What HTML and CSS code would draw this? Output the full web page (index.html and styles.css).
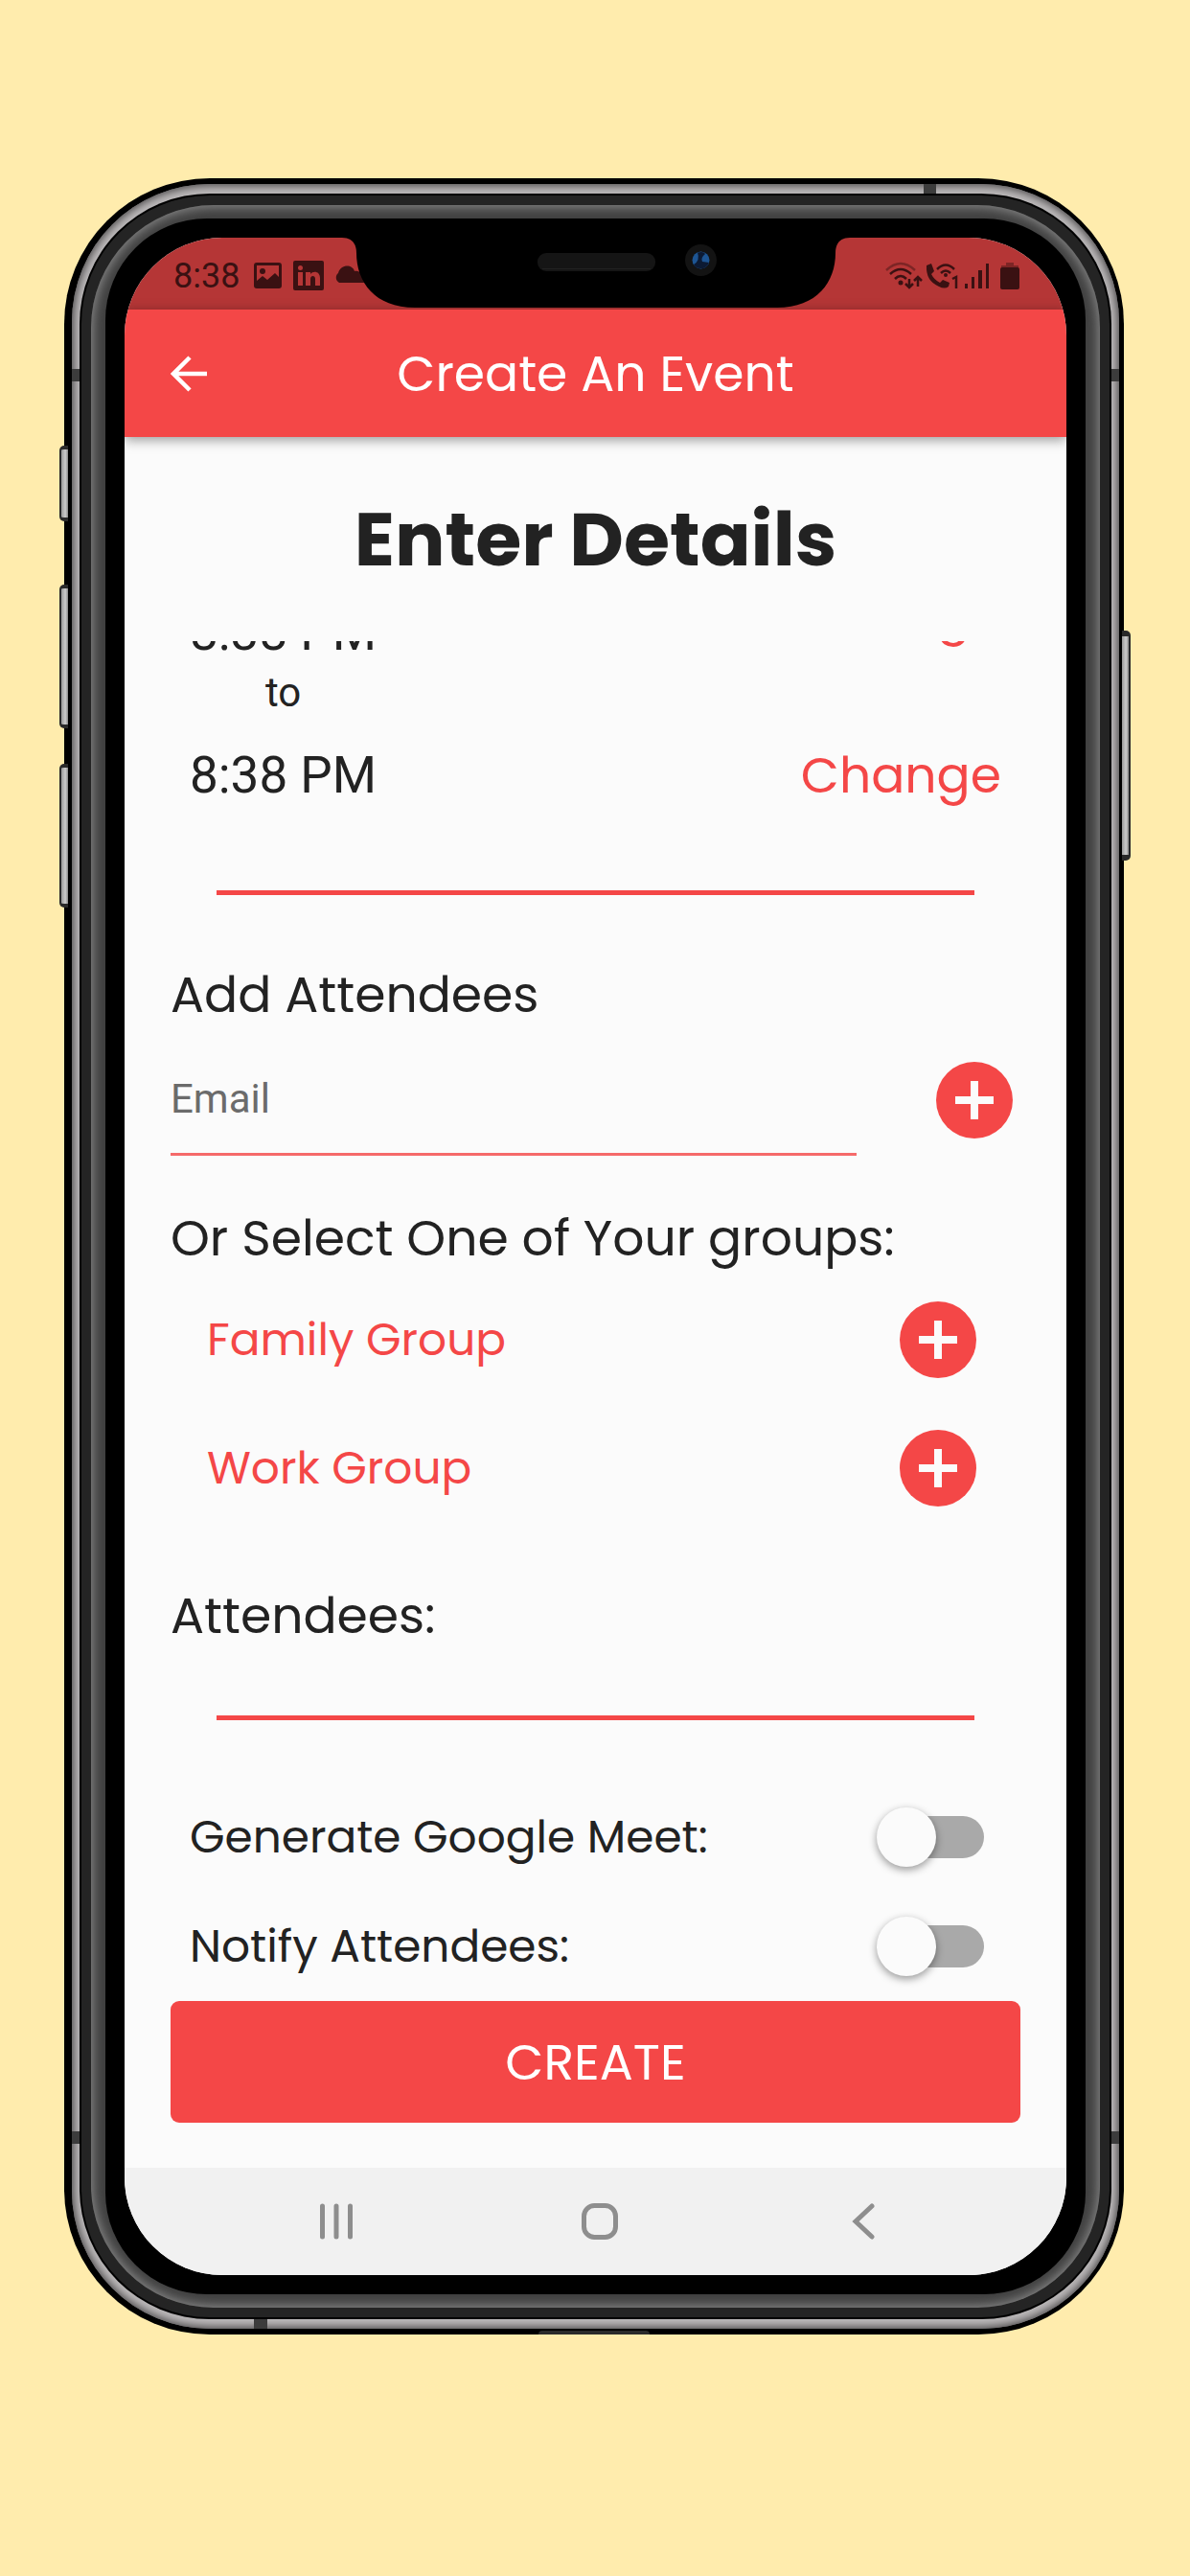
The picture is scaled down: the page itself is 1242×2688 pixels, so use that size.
FILE: index.html
```html
<!DOCTYPE html>
<html lang="en">
<head>
<meta charset="utf-8">
<meta name="viewport" content="width=device-width, initial-scale=1">
<title>Create An Event</title>
<link rel="stylesheet" href="styles.css">
</head>
<body>
<div class="phone">
  <div class="shell">
    <span class="antenna antenna-left antenna-high"></span>
    <span class="antenna antenna-left antenna-low"></span>
    <span class="antenna antenna-right antenna-high"></span>
    <span class="antenna antenna-right antenna-low"></span>
    <span class="antenna antenna-top"></span>
    <span class="antenna antenna-bottom"></span>
    <span class="port"></span>
    <div class="rim"><div class="edge"><div class="band"><div class="bevel"><div class="glass">
      <div class="screen">
        <svg class="notch" viewBox="0 0 530 73" aria-hidden="true">
          <path d="M0 0C10 0 15 6 15 16C15 46 34 73 76 73H454C496 73 515 46 515 16C515 6 520 0 530 0Z" fill="#000"/>
          <rect x="204" y="16" width="123" height="19" rx="9" fill="#151515"/>
          <path d="M209 32.500H322" stroke="#222" stroke-width="1"/>
          <circle cx="374.500" cy="23.500" r="16.500" fill="#131313"/>
          <circle cx="374.500" cy="23.500" r="9" fill="#1d5593"/>
          <path d="M371 15.500Q378 14 379 17Q374 21 376 25L383 26Q380 33 374 32Q369 32 367 28Q374 24 371 15.500Z" fill="#0c1a33"/>
        </svg>
        <div class="status">
          <span class="clock">8:38</span>
          <svg class="status-left" viewBox="0 0 116 34" aria-hidden="true">
            <path fill-rule="evenodd" d="M3 3H26Q29 3 29 6V27Q29 30 26 30H3Q0 30 0 27V6Q0 3 3 3ZM3 6V22L9 17L14 21L22 14L26 18V6Z"/>
            <circle cx="9" cy="12" r="3"/>
            <rect x="41" y="1" width="32" height="31" rx="2"/>
            <g class="cutout"><circle cx="48.500" cy="8.500" r="2.500"/><path d="M46 13H51V27H46ZM54 13H59V15C62 11 69 12 69 19V27H64V20C64 16 59 16 59 20V27H54Z"/></g>
            <path d="M89 24A6 6 0 0 1 88 14C91 4 103 5 105 12C110 11 114 14 115 24Z"/>
          </svg>
          <svg class="status-right" viewBox="0 0 140 32" aria-hidden="true">
            <g fill="none" stroke="currentColor" stroke-width="2.500">
              <path opacity=".45" d="M1 10Q16-4 31 10"/>
              <path d="M5 14Q16 4 27 14"/>
              <path d="M10 19Q16 13 22 19"/>
              <path d="M25 19V27M21 24L25 28L29 24M34 27V18M30 21L34 17L38 21"/>
              <path d="M54 9Q63 0 72 9"/>
              <path d="M58 13Q63 8 68 13"/>
              <path d="M70 19L74 17V29"/>
            </g>
            <circle cx="16" cy="23" r="2.500"/><circle cx="63" cy="15" r="2"/>
            <path d="M43 5L48 3L51 11L48 14Q51 20 57 23L60 20L67 23L66 27Q62 30 56 27Q42 21 43 5Z"/>
            <path d="M83 24H86V29H83ZM90 17H93V29H90ZM97 10H101V29H97ZM105 3H108V29H105Z"/>
            <path opacity=".45" d="M126 2H134V5H139V8H121V5H126Z"/>
            <rect x="120" y="7" width="20" height="23" rx="2"/>
          </svg>
        </div>
        <header class="appbar">
          <button class="back" type="button" aria-label="Back">
            <svg viewBox="0 0 38 38" aria-hidden="true"><path d="M38 19H4M20 2L3 19L20 36" fill="none" stroke="currentColor" stroke-width="4.500"/></svg>
          </button>
          <h1 class="title">Create An Event</h1>
        </header>
        <h2 class="heading">Enter Details</h2>
        <form class="form">
          <div class="fields">
            <div class="time-row time-start">
              <div class="time-stack"><span class="time">8:38 PM</span><span class="to">to</span></div>
              <button class="change" type="button">Change</button>
            </div>
            <div class="time-row time-end">
              <span class="time">8:38 PM</span>
              <button class="change" type="button">Change</button>
            </div>
            <hr class="divider">
            <h3 class="label">Add Attendees</h3>
            <div class="email-row">
              <input class="email" type="email" placeholder="Email" aria-label="Email">
              <button class="add" type="button" aria-label="Add attendee"><svg viewBox="0 0 40 40" aria-hidden="true"><path d="M20 0V40M0 20H40" stroke="currentColor" stroke-width="8"/></svg></button>
            </div>
            <h3 class="label label-groups">Or Select One of Your groups:</h3>
            <div class="group-row">
              <span class="group">Family Group</span>
              <button class="add" type="button" aria-label="Add Family Group"><svg viewBox="0 0 40 40" aria-hidden="true"><path d="M20 0V40M0 20H40" stroke="currentColor" stroke-width="8"/></svg></button>
            </div>
            <div class="group-row">
              <span class="group">Work Group</span>
              <button class="add" type="button" aria-label="Add Work Group"><svg viewBox="0 0 40 40" aria-hidden="true"><path d="M20 0V40M0 20H40" stroke="currentColor" stroke-width="8"/></svg></button>
            </div>
            <h3 class="label label-list">Attendees:</h3>
            <hr class="divider">
            <div class="switch-row">
              <label for="meet">Generate Google Meet:</label>
              <input class="switch" id="meet" type="checkbox" role="switch">
            </div>
            <div class="switch-row">
              <label for="notify">Notify Attendees:</label>
              <input class="switch" id="notify" type="checkbox" role="switch">
            </div>
          </div>
          <button class="create" type="submit">CREATE</button>
        </form>
        <nav class="navbar" aria-label="System">
          <button type="button" aria-label="Recent apps"><svg viewBox="0 0 38 38" aria-hidden="true"><path d="M4.500 3V35M19 3V35M33.500 3V35"/></svg></button>
          <button type="button" aria-label="Home"><svg viewBox="0 0 38 38" aria-hidden="true"><rect x="2.500" y="2.500" width="33" height="33" rx="11"/></svg></button>
          <button type="button" aria-label="Back"><svg viewBox="0 0 38 38" aria-hidden="true"><path d="M28 3L11 19L28 35"/></svg></button>
        </nav>
      </div>
    </div></div></div></div></div>
  </div>
  <span class="key key-mute"></span>
  <span class="key key-up"></span>
  <span class="key key-down"></span>
  <span class="key key-power"></span>
</div>
</body>
</html>
```
FILE: styles.css
```css
:root {
  --red: #f44747;
  --ink: #222;
  --brand: Poppins, Inter, "Open Sans", sans-serif;
  --system: Roboto, "Open Sans", sans-serif;
}

* { box-sizing: border-box; margin: 0; }

body {
  display: flex;
  height: 100vh;
  padding: 186px 69px 252px 67px;
  background: #ffecad;
  color: var(--ink);
  font-family: var(--brand);
}

button {
  padding: 0;
  border: 0;
  background: none;
  color: inherit;
  font: inherit;
  cursor: pointer;
}

/* Handset */
.phone, .shell, .rim, .edge, .band, .bevel, .glass, .screen {
  display: flex;
  flex: 1;
  min-width: 0;
  min-height: 0;
}
.phone, .shell { position: relative; }
.shell { padding: 6px 5px 6px 8px; border-radius: 152px; background: #000; }
.rim { padding: 10px 8px; border-radius: 144px; background: #bcb9ba; box-shadow: inset 0 0 9px 2px #4a4849; }
.edge { padding: 2px; border-radius: 136px; background: #000; }
.band { padding: 10px; border-radius: 134px; background: #242424; }
.bevel { padding: 14px 15px; border-radius: 128px; background: #404040; box-shadow: inset 0 0 12px 2px #8a8a8a; }
.glass { padding: 20px; border-radius: 106px; background: #000; }
.screen {
  position: relative;
  flex-direction: column;
  overflow: hidden;
  border-radius: 102px;
  background: #fbfbfb;
}

.key {
  position: absolute;
  left: -5px;
  width: 9px;
  border: solid #2a2a2a;
  border-width: 4px 0 4px 2px;
  border-radius: 5px 0 0 5px;
  background: linear-gradient(90deg, #999, #ccc 60%, #888);
}
.key-mute { top: 279px; height: 79px; }
.key-up { top: 424px; height: 150px; }
.key-down { top: 611px; height: 150px; }
.key-power {
  top: 472px;
  right: -7px;
  left: auto;
  height: 240px;
  border-width: 6px 2px 6px 0;
  border-radius: 0 5px 5px 0;
}

.antenna { position: absolute; background: #3c3c3c; }
.antenna-left { left: 8px; width: 8px; height: 13px; }
.antenna-right { right: 5px; width: 8px; height: 13px; }
.antenna-high { top: 199px; }
.antenna-low { bottom: 199px; }
.antenna-top { top: 6px; right: 196px; width: 13px; height: 10px; }
.antenna-bottom { bottom: 6px; left: 198px; width: 14px; height: 10px; }
.port {
  position: absolute;
  bottom: 0;
  left: calc(50% - 58px);
  width: 116px;
  height: 4px;
  border-radius: 6px 6px 0 0;
  background: #2b2b2b;
}

.notch { position: absolute; top: 0; left: calc(50% - 265px); width: 530px; height: 73px; }

/* System bars */
.status {
  display: flex;
  flex: none;
  align-items: center;
  height: 75px;
  padding: 4px 49px 0 51px;
  background: #b53636;
  color: #3a1112;
  font: 36px/40px var(--system);
}
.status svg { fill: currentColor; }
.status-left { width: 116px; height: 34px; margin-left: 15px; }
.status-left .cutout { fill: #b53636; }
.status-right { width: 140px; height: 32px; margin-left: auto; }

.navbar {
  display: flex;
  flex: none;
  align-items: center;
  justify-content: center;
  gap: 237px;
  height: 112px;
  padding-left: 8px;
  background: #f1f1f1;
  color: #8e8e8e;
}
.navbar button, .navbar svg { display: block; width: 38px; height: 38px; }
.navbar svg { fill: none; stroke: currentColor; stroke-width: 5px; stroke-linecap: round; }

/* App */
.appbar {
  display: grid;
  flex: none;
  grid-template-columns: 38px 1fr 38px;
  align-items: center;
  height: 133px;
  padding: 0 48px;
  background: var(--red);
  box-shadow: 0 3px 12px rgb(0 0 0 / 40%);
  color: #fff;
}
.back, .back svg { display: block; width: 38px; height: 38px; }
.title { font-size: 52px; line-height: 78px; font-weight: 400; text-align: center; }

.heading {
  flex: none;
  padding: 46px 48px;
  font-size: 78px;
  line-height: 121px;
  font-weight: 700;
  text-align: center;
}

.form {
  display: flex;
  flex: 1;
  flex-direction: column;
  min-height: 0;
  padding: 0 48px 47px;
}
/* Scrolled to its end, so the first row is cut by the top edge. */
.fields {
  display: flex;
  flex: 1;
  flex-direction: column;
  justify-content: flex-end;
  min-height: 0;
  margin: 0 -48px;
  padding: 0 48px;
  overflow: hidden;
}
.fields > * { flex: none; }

.time-row { display: flex; justify-content: space-between; padding: 0 20px; }
.time-start { align-items: flex-start; }
.time-end { align-items: center; height: 110px; }
.time-stack { display: flex; flex-direction: column; align-items: center; padding: 17px 0 7px; }
.time { font: 53px/78px var(--system); }
.to { font: 42px/48px var(--system); }
.change { color: var(--red); font-size: 52px; line-height: 78px; }

.divider { height: 5px; margin: 65px 48px; border: 0; background: var(--red); }
.label { font-size: 52px; line-height: 78px; font-weight: 400; }
.label-groups { margin-top: 47px; }
.label-list { margin-top: 48px; }

.email-row {
  display: flex;
  align-items: center;
  justify-content: space-between;
  gap: 83px;
  height: 116px;
  margin-top: 13px;
  padding-right: 8px;
}
.email {
  flex: 1;
  min-width: 0;
  height: 116px;
  padding: 0;
  border: 0;
  border-bottom: 3px solid #f56a6a;
  border-radius: 0;
  outline: 0;
  background: none;
  color: var(--ink);
  font: 42px/48px var(--system);
}
.email::placeholder { color: #6b6b6b; opacity: 1; }

.add {
  display: grid;
  flex: none;
  place-items: center;
  width: 80px;
  height: 80px;
  border-radius: 50%;
  background: var(--red);
  color: #fbfbfb;
}
.add svg { width: 40px; height: 40px; }

.group-row {
  display: flex;
  align-items: center;
  justify-content: space-between;
  height: 134px;
  padding: 0 46px 0 38px;
  color: var(--red);
  font-size: 47px;
  line-height: 72px;
}

.switch-row {
  display: flex;
  align-items: center;
  justify-content: space-between;
  height: 114px;
  padding: 0 38px 0 20px;
  font-size: 47px;
  line-height: 72px;
}
.switch {
  display: flex;
  align-items: center;
  width: 97px;
  height: 44px;
  border-radius: 22px;
  appearance: none;
  background: #a9a9a9;
}
.switch::before {
  flex: none;
  width: 62px;
  height: 62px;
  margin-left: -15px;
  border-radius: 50%;
  background: #fbfbfb;
  box-shadow: 0 3px 8px rgb(0 0 0 / 40%);
  content: "";
}
.switch:checked { justify-content: flex-end; background: #f9a3a3; }
.switch:checked::before { margin: 0 -15px 0 0; background: var(--red); }

.create {
  flex: none;
  height: 127px;
  border-radius: 9px;
  background: var(--red);
  color: #fff;
  font-size: 52px;
  line-height: 78px;
}
```
